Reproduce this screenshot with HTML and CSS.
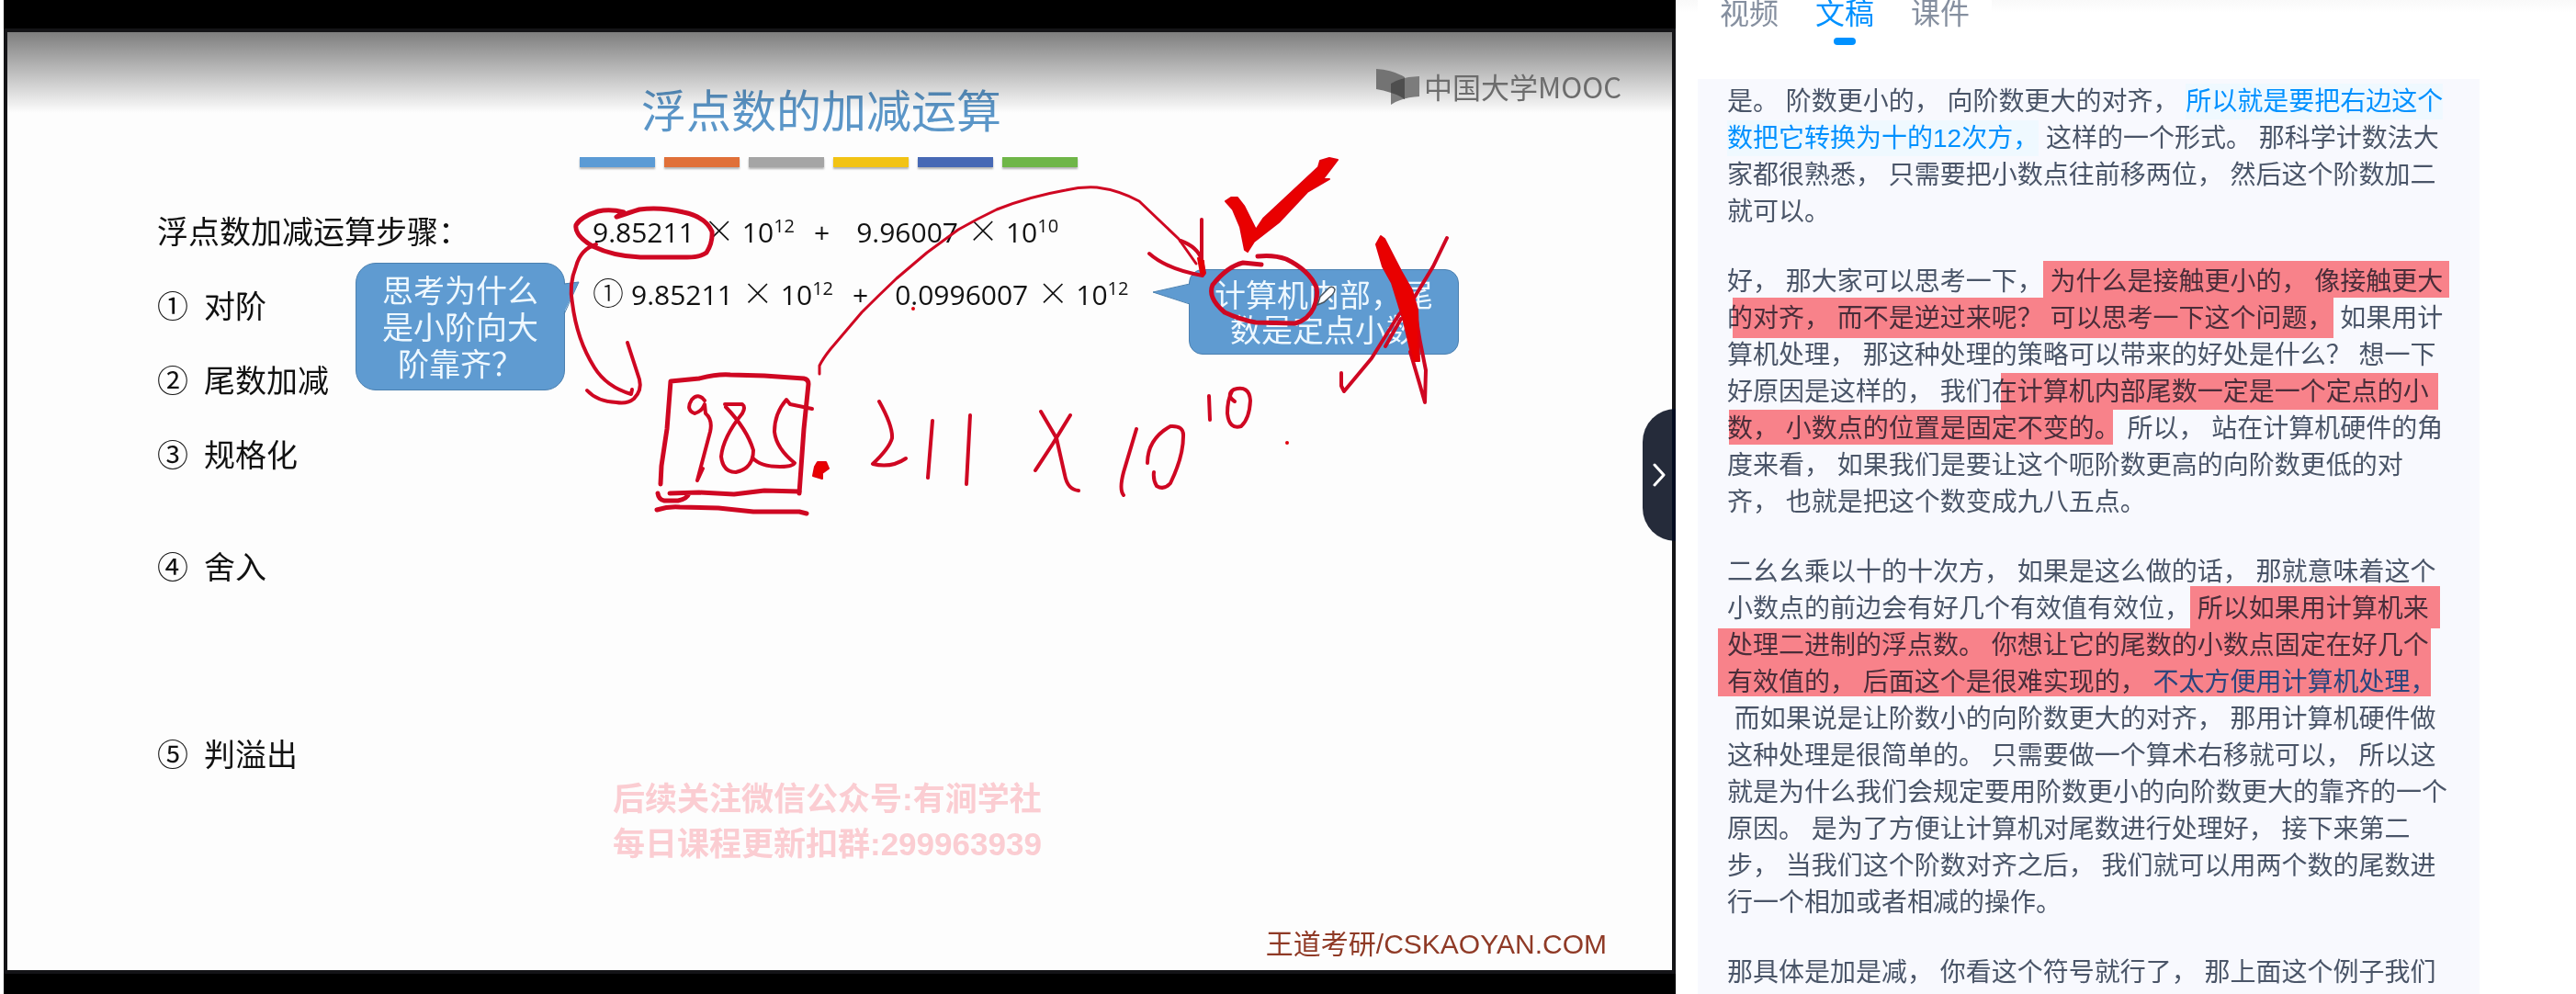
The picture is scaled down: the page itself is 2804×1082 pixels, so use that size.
FILE: index.html
```html
<!DOCTYPE html>
<html lang="zh-CN">
<head>
<meta charset="utf-8">
<title>浮点数的加减运算</title>
<link rel="stylesheet" href="styles.css">
</head>
<body>
<main class="app">
  <section class="player" aria-label="视频">
    <div class="slide">
      <header class="slide-head">
        <h1 class="title">浮点数的加减运算</h1>
        <div class="bars">
          <span class="bar bar-blue"></span>
          <span class="bar bar-orange"></span>
          <span class="bar bar-gray"></span>
          <span class="bar bar-yellow"></span>
          <span class="bar bar-indigo"></span>
          <span class="bar bar-green"></span>
        </div>
      </header>

      <div class="slide-body">
        <div class="steps">
          <h2 class="steps-title">浮点数加减运算步骤：</h2>
          <ol class="step-list">
            <li><span class="num">①</span>对阶</li>
            <li><span class="num">②</span>尾数加减</li>
            <li><span class="num">③</span>规格化</li>
            <li class="gap-2"><span class="num">④</span>舍入</li>
            <li class="gap-4"><span class="num">⑤</span>判溢出</li>
          </ol>
        </div>
        <div class="equations">
          <p class="eq">9.85211<span class="times">×</span>10<sup>12</sup><span class="plus">+</span>9.96007<span class="times">×</span>10<sup>10</sup></p>
          <p class="eq"><span class="eq-num">①</span>9.85211<span class="times">×</span>10<sup>12</sup><span class="plus">+</span>0.0996007<span class="times">×</span>10<sup>12</sup></p>
        </div>
      </div>

      <div class="callout callout-think">
        <svg class="tail tail-right" width="18" height="38" viewBox="0 0 18 38"><path d="M0 3L17 1L0 36Z" fill="#5f9bd1"/><path d="M1 3L17 1L1 36" fill="none" stroke="#4b80b0"/></svg>
        思考为什么<br>是小阶向大<br>阶靠齐？
      </div>
      <div class="callout callout-note">
        <svg class="tail tail-left" width="42" height="24" viewBox="0 0 42 24"><path d="M42 1L1 10L42 23Z" fill="#5f9bd1"/><path d="M41 1L1 10L41 23" fill="none" stroke="#4b80b0"/></svg>
        计算机内部，尾<br>数是定点小数
      </div>

      <p class="watermark">后续关注微信公众号:有涧学社<br>每日课程更新扣群:299963939</p>
      <p class="credit">王道考研/CSKAOYAN.COM</p>

      <div class="shade"></div>
      <div class="brand">
        <svg width="50" height="42" viewBox="0 0 50 42"><path d="M1 2Q19 3 32 11V35Q19 27 1 24Z" fill="#737373"/><path d="M17 18Q27 11 48 10V32Q29 33 17 41Z" fill="#7c7c7c"/><path d="M17 18Q23 14 32 12V35Q25 30 17 28Z" fill="#4e4e4e"/></svg>
        <span>中国大学MOOC</span>
      </div>

      <svg class="ink" viewBox="8 35 1812 1021" preserveAspectRatio="none" aria-hidden="true">
        <g class="pen pen-bold">
          <path d="M671 236L679 231Q664 227 651 230Q632 236 627 245Q625 256 645 268Q668 279 697 280L748 280Q762 280 769 275Q776 264 775 252Q768 236 744 231Q719 225 696 228Q686 231 672 236"/>
          <path d="M1373 288L1353 286Q1336 290 1320 310Q1314 324 1333 340Q1350 348 1367 351L1410 352Q1424 348 1430 335Q1435 323 1433 313Q1425 294 1400 282Q1386 277 1369 279"/>
          <path d="M719 527L720 507L726 467L730 415L761 412Q780 407 795 408L832 409L875 412Q880 413 880 418L875 467L870 537"/>
          <path d="M729 537L761 536L799 538L832 534L870 535M716 537Q717 544 723 545H738Q748 543 750 537M715 555Q728 551 740 552L782 553L820 557H870L878 559"/>
        </g>
        <g class="pen">
          <path d="M649 266Q632 271 627 290Q619 310 623 330Q628 370 647 400Q660 421 687 429L688 424M683 373L696 413Q699 425 690 434Q683 440 671 438Q650 437 639 425"/>
          <path d="M767 436Q760 427 753 435Q746 446 756 450Q764 448 767 440L768 450Q776 457 773 470L759 523L765 510"/>
          <path d="M789 440H808Q812 443 808 450Q787 476 785 497Q787 514 801 514Q820 510 820 490Q813 467 790 443"/>
          <path d="M819 498Q827 508 849 508Q863 508 865 504Q845 488 843 470Q843 450 856 435L860 440L884 445"/>
          <path d="M957 437Q972 464 971 477Q968 488 950 505Q970 510 986 499M1015 458L1010 520M1056 452L1052 527"/>
          <path d="M1133 448L1150 477L1159 517Q1162 533 1174 534M1165 452L1146 483L1127 512"/>
          <path d="M1237 467L1223 514Q1218 533 1223 539M1249 504Q1249 478 1274 464Q1289 463 1288 475Q1288 497 1274 526Q1267 534 1259 529Q1255 522 1256 514"/>
          <path d="M1316 431L1317 457M1344 437Q1334 430 1343 424Q1360 419 1361 436Q1360 456 1351 464Q1338 468 1336 450Q1336 435 1341 426"/>
          <path d="M1575 259L1560 290L1540 323L1523 342L1493 390L1463 426L1460 420V406M1525 347L1508 377M1540 337Q1545 370 1552 403L1551 438L1545 417L1535 383"/>
          <path d="M1285 262Q1304 269 1308 283L1310 297M1308 239V283L1311 297M1251 276Q1270 293 1309 300"/>
        </g>
        <g class="pen pen-fine">
          <path d="M892 407V398Q896 390 904 380L938 340Q956 322 976 303L1009 275L1043 250Q1064 238 1085 228Q1120 214 1160 207Q1177 203 1194 204Q1218 207 1240 219L1283 260L1302 287"/>
        </g>
        <g class="fill">
          <path d="M890 503L899 503L902 510L895 515V521L885 518L887 508Z"/>
          <path d="M1334 219L1340 215L1347 215L1354 224L1367 250L1375 238L1435 182L1437 175L1447 172L1456 174L1450 182L1440 195L1447 195L1423 209L1392 242L1365 263L1358 274L1355 272L1350 247L1342 228Z"/>
          <path d="M1498 266L1503 257L1507 260L1525 295L1537 316L1543 337L1545 393L1538 393L1528 350L1515 308L1505 290Z"/>
          <path d="M1304 281L1310 284L1311 299L1307 297Z"/>
          <circle cx="994" cy="336" r="1"/>
          <circle cx="1401" cy="482" r="1"/>
        </g>
        <path d="M1434 332L1437 323L1447 313Q1451 311 1453 315Q1453 318 1450 321L1441 329Z" fill="#fff" stroke="#47545e" stroke-width="1.5"/>
      </svg>
    </div>
    <button class="toggle" type="button" aria-label="收起">
      <svg width="14" height="26" viewBox="0 0 14 26"><path d="M2 2L12 13L2 24" fill="none" stroke="#fff" stroke-width="3" stroke-linecap="round" stroke-linejoin="round"/></svg>
    </button>
  </section>

  <aside class="side">
    <nav class="tabs">
      <a class="tab" href="#video">视频</a>
      <a class="tab active" href="#transcript">文稿</a>
      <a class="tab" href="#slides">课件</a>
    </nav>
    <article class="transcript" id="transcript">
      <p>是。 阶数更小的， 向阶数更大的对齐， <span class="current">所以就是要把右边这个数把它转换为十的12次方，</span> 这样的一个形式。 那科学计数法大家都很熟悉， 只需要把小数点往前移两位， 然后这个阶数加二就可以。</p>
      <p>好， 那大家可以思考一下， 为什么是接触更小的， 像接触更大的对齐， 而不是逆过来呢？ 可以思考一下这个问题， 如果用计算机处理， 那这种处理的策略可以带来的好处是什么？ 想一下好原因是这样的， 我们在计算机内部尾数一定是一个定点的小数， 小数点的位置是固定不变的。 所以， 站在计算机硬件的角度来看， 如果我们是要让这个呃阶数更高的向阶数更低的对齐， 也就是把这个数变成九八五点。
        <i class="hl hl-a1"></i><i class="hl hl-a2"></i><i class="hl hl-b1"></i><i class="hl hl-b2"></i></p>
      <p>二幺幺乘以十的十次方， 如果是这么做的话， 那就意味着这个小数点的前边会有好几个有效值有效位， 所以如果用计算机来处理二进制的浮点数。 你想让它的尾数的小数点固定在好几个有效值的， 后面这个是很难实现的， <a class="seek" href="#seek">不太方便用计算机处理，</a><br>&nbsp;而如果说是让阶数小的向阶数更大的对齐， 那用计算机硬件做这种处理是很简单的。 只需要做一个算术右移就可以， 所以这就是为什么我们会规定要用阶数更小的向阶数更大的靠齐的一个原因。 是为了方便让计算机对尾数进行处理好， 接下来第二步， 当我们这个阶数对齐之后， 我们就可以用两个数的尾数进行一个相加或者相减的操作。
        <i class="hl hl-c1"></i><i class="hl hl-c2"></i></p>
      <p>那具体是加是减， 你看这个符号就行了， 那上面这个例子我们</p>
    </article>
  </aside>
</main>
</body>
</html>
```
FILE: styles.css
```css
* { box-sizing: border-box; }

body {
  margin: 0;
  background: #fff;
  font-family: "Liberation Sans", "Noto Sans CJK SC", sans-serif;
}

h1, h2, p, ol { margin: 0; padding: 0; font-weight: 400; }

.app {
  display: flex;
  height: 100vh;
  padding-left: 4px;
  overflow: hidden;
}

/* Video */
.player {
  position: relative;
  flex: none;
  display: flex;
  width: 65%;
  padding: 31px 0 22px;
  background: #000;
}

.slide {
  position: relative;
  flex: 1;
  border: 4px solid #141417;
  background: #fdfdfd;
  color: #111;
  font-family: "Noto Sans CJK SC", sans-serif;
}

.slide-head {
  display: flex;
  flex-direction: column;
  align-items: center;
  padding-top: 51px;
}

.title {
  padding-right: 40px;
  color: #5b96c8;
  font-size: 49px;
  line-height: 64px;
}

.bars {
  display: flex;
  gap: 10px;
  margin-top: 21px;
  padding-right: 24px;
}

.bar {
  width: 82px;
  height: 11px;
  box-shadow: 0 2px 2px rgba(0, 0, 0, 0.3);
}
.bar-blue { background: #5b9bd5; }
.bar-orange { background: #e07038; }
.bar-gray { background: #a5a5a5; }
.bar-yellow { background: #f2c314; }
.bar-indigo { background: #4769b5; }
.bar-green { background: #6fb648; }

.slide-body {
  display: flex;
  padding: 49px 0 0 163px;
  line-height: 40px;
}

.steps { width: 474px; }
.steps-title,
.step-list { font-size: 34px; }

.step-list {
  margin-top: 41px;
  list-style: none;
}
.step-list li { margin-bottom: 41px; }
.step-list .gap-2 { margin-top: 82px; }
.step-list .gap-4 { margin-top: 164px; }
.num { margin-right: 17px; }

.equations { padding-top: 2px; }
.eq {
  height: 40px;
  margin-bottom: 28px;
  font-family: "Open Sans", "Noto Sans CJK SC", sans-serif;
  font-size: 30px;
  white-space: nowrap;
}
.eq sup {
  position: relative;
  top: -11px;
  font-size: 20px;
  line-height: 0;
  vertical-align: baseline;
}
.times {
  display: inline-block;
  width: 34px;
  margin: 0 8px 0 10px;
  font-family: "Noto Sans CJK SC", sans-serif;
  font-size: 34px;
  font-weight: 300;
  line-height: 0;
  text-align: center;
}
.plus { margin: 0 29px 0 21px; }
.eq-num {
  margin-right: 8px;
  font-size: 34px;
  font-weight: 300;
  line-height: 0;
}

.callout {
  position: absolute;
  display: flow-root;
  border: 1px solid #4b80b0;
  background: #5f9bd1;
  color: #eef8ff;
  font-size: 34px;
  text-align: center;
  white-space: nowrap;
}
.callout-think {
  top: 251px;
  left: 379px;
  width: 228px;
  height: 139px;
  padding-top: 8px;
  border-radius: 22px;
  line-height: 40px;
}
.callout-note {
  top: 258px;
  left: 1286px;
  width: 294px;
  height: 93px;
  padding-top: 7px;
  border-radius: 15px;
  line-height: 38px;
}
.tail { position: absolute; }
.tail-right { top: 19px; left: 225px; }
.tail-left { top: 14px; right: 291px; }

.watermark {
  position: absolute;
  top: 810px;
  left: 659px;
  color: #fbcdd2;
  font-family: "Liberation Sans", "Noto Sans CJK SC", sans-serif;
  font-size: 35px;
  font-weight: 700;
  line-height: 49px;
}

.credit {
  position: absolute;
  right: 71px;
  bottom: 8px;
  color: #8f3a26;
  font-family: "Liberation Sans", "Noto Sans CJK SC", sans-serif;
  font-size: 30px;
  line-height: 40px;
}

.shade {
  position: absolute;
  inset: 0 0 auto;
  height: 88px;
  background: linear-gradient(rgba(0, 0, 0, 0.5), rgba(0, 0, 0, 0.25) 50%, rgba(0, 0, 0, 0));
}

.brand {
  position: absolute;
  top: 38px;
  right: 55px;
  display: flex;
  align-items: center;
  gap: 3px;
  color: #6c6c6c;
  font-size: 31px;
  line-height: 42px;
}

.ink {
  position: absolute;
  inset: 0;
  width: 100%;
  height: 100%;
}
.pen {
  fill: none;
  stroke: #cf0722;
  stroke-width: 4;
  stroke-linecap: round;
  stroke-linejoin: round;
}
.pen-bold { stroke-width: 5; }
.pen-fine { stroke-width: 3; }
.fill {
  fill: #e90000;
  stroke: #e0000c;
  stroke-width: 2;
  stroke-linejoin: round;
}

.toggle {
  position: absolute;
  top: 445px;
  right: 0;
  display: flex;
  align-items: center;
  justify-content: center;
  width: 36px;
  height: 144px;
  padding: 0;
  border: 0;
  border-radius: 36px 0 0 36px;
  background: linear-gradient(90deg, #252b3a 32px, #020b20 32px);
}

/* Transcript */
.side {
  flex: none;
  display: flex;
  flex-direction: column;
  width: 35%;
  padding: 0 105px 0 24px;
  background: linear-gradient(#f9f9f9, #fff 14px);
}

.tabs {
  display: flex;
  flex: none;
  align-self: flex-start;
  gap: 40px;
  height: 86px;
  padding: 0 24px;
  background: #fff;
}

.tab {
  position: relative;
  height: 49px;
  color: #858f9f;
  font-size: 32px;
  line-height: 30px;
  text-decoration: none;
}
.tab.active { color: #0091ff; }
.tab.active::after {
  content: "";
  position: absolute;
  bottom: 0;
  left: 20px;
  width: 24px;
  height: 8px;
  border-radius: 4px;
  background: #0091ff;
}

.transcript {
  flex: 1 0 auto;
  padding: 5px 32px 0;
  background: #f8f9fe;
  color: #4a5568;
  font-size: 28px;
  line-height: 40px;
  text-spacing-trim: space-all;
}
.transcript p {
  position: relative;
  margin-bottom: 36px;
}

.current {
  padding: 4px 0;
  background: #eff9ff;
  color: #0091ff;
}
.seek {
  color: #2b83e6;
  text-decoration: none;
}

/* Reader's own highlighter strokes, laid over the text */
.hl {
  position: absolute;
  background: #ff858b;
  mix-blend-mode: multiply;
}
.hl-a1 { top: -3px; left: 344px; width: 442px; height: 40px; }
.hl-a2 { top: 37px; left: 6px; width: 654px; height: 44px; }
.hl-b1 { top: 119px; left: 298px; width: 476px; height: 40px; }
.hl-b2 { top: 159px; left: 2px; width: 418px; height: 38px; }
.hl-c1 { top: 35px; left: 504px; width: 272px; height: 46px; }
.hl-c2 { top: 81px; left: -10px; width: 776px; height: 74px; }
```
